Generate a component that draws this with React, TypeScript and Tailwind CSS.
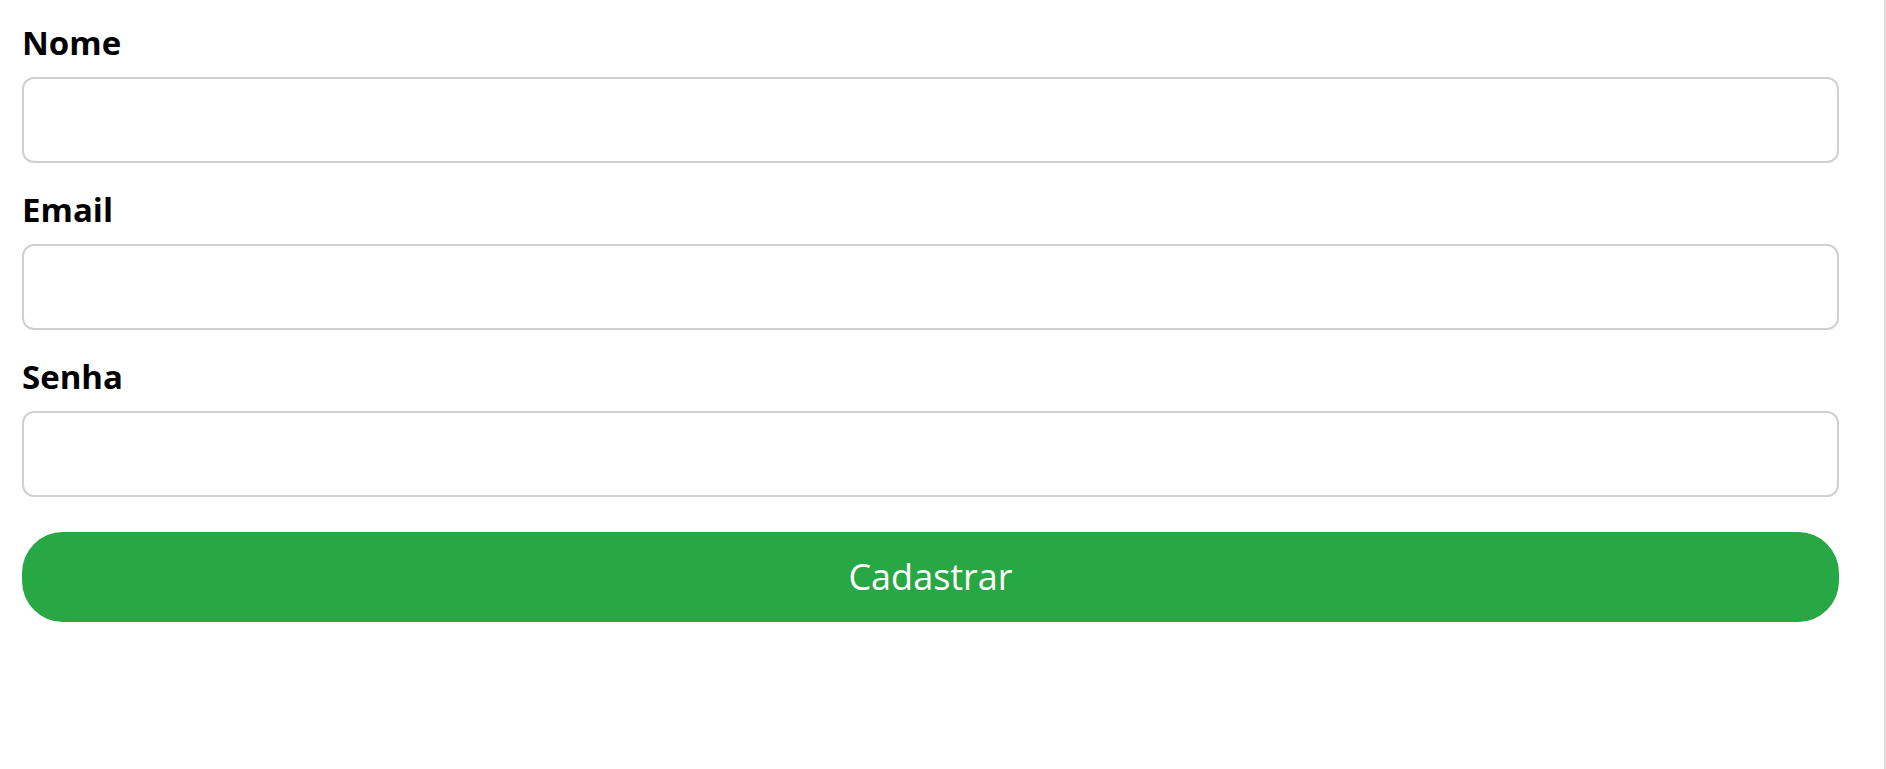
import React, { useState } from 'react';

const fields = [
  { id: 'nome', label: 'Nome', type: 'text' },
  { id: 'email', label: 'Email', type: 'email' },
  { id: 'senha', label: 'Senha', type: 'password' },
];

export default function App() {
  const [values, setValues] = useState<Record<string, string>>({});

  return (
    <div className="min-h-screen w-full bg-white border-r-2 border-[#dcdcdc] font-['Open_Sans',sans-serif]">
      <form
        className="flex flex-col pl-[22px] pr-[45px] pt-[23px]"
        onSubmit={(e) => e.preventDefault()}
      >
        {fields.map((f, i) => (
          <div key={f.id} className={i > 0 ? 'flex flex-col mt-[27px]' : 'flex flex-col'}>
            <label
              htmlFor={f.id}
              className="text-[33px] leading-[40px] font-bold text-black mb-[14px]"
            >
              {f.label}
            </label>
            <input
              id={f.id}
              type={f.type}
              value={values[f.id] ?? ''}
              onChange={(e) => setValues({ ...values, [f.id]: e.target.value })}
              className="h-[86px] w-full rounded-[12px] border-2 border-[#d0d0d0] px-4 text-[30px] outline-none"
            />
          </div>
        ))}

        <button
          type="submit"
          className="mt-[35px] h-[90px] w-full rounded-[41px] bg-[#28a745] text-white text-[36px] font-normal"
        >
          Cadastrar
        </button>
      </form>
    </div>
  );
}
